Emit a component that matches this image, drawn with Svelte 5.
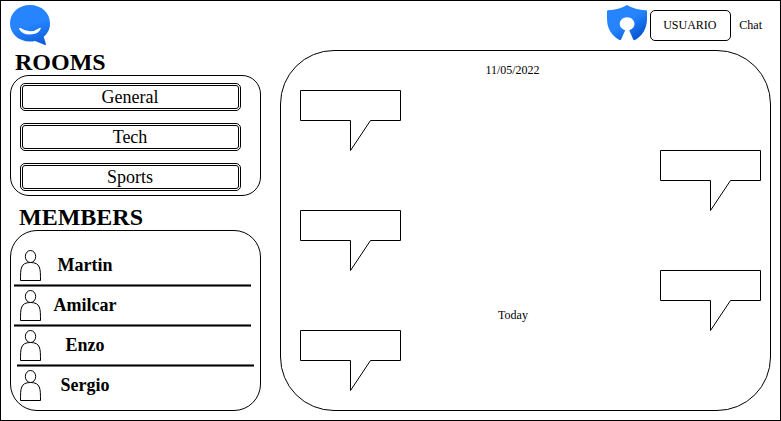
<script>
  const rooms = ['General', 'Tech', 'Sports'];
  const members = [
    { name: 'Martin', rule: 'near' },
    { name: 'Amilcar', rule: 'near' },
    { name: 'Enzo', rule: 'far' },
    { name: 'Sergio', rule: '' }
  ];
  const messages = [
    { mine: false },
    { mine: true },
    { mine: false },
    { mine: true, label: 'Today' },
    { mine: false }
  ];
</script>

<div class="frame">
  <header>
    <svg class="logo" width="41" height="41" viewBox="0 0 41 41">
      <defs>
        <linearGradient id="tail" gradientUnits="userSpaceOnUse" x1="33" y1="42" x2="25" y2="18">
          <stop offset="0" stop-color="#0a58d4" />
          <stop offset="1" stop-color="#2684ff" />
        </linearGradient>
      </defs>
      <path fill="url(#tail)" d="M20 0C31.500 0 40 7.800 40 18.500C40 24 37.800 28.500 33.700 31.700L36 39.300Q36 40.300 35 39.900L25 35.900Q22.500 36.500 20 36.500C8.500 36.500 0 28.500 0 18.500C0 7.800 8.500 0 20 0Z" />
      <path fill="#fff" d="M8.900 23.500Q9.200 22.500 10.400 23.100Q20 29.500 29.600 22.900Q30.700 22.300 31 23.300Q28.500 29.500 20 29.500Q11.500 29.500 8.900 23.500Z" />
    </svg>
    <div class="account">
      <svg width="41" height="36" viewBox="0 0 41 36">
        <defs>
          <linearGradient id="shield" gradientUnits="userSpaceOnUse" x1="35" y1="33" x2="22" y2="15">
            <stop offset="0" stop-color="#0052cc" />
            <stop offset="1" stop-color="#2684ff" />
          </linearGradient>
        </defs>
        <path fill="url(#shield)" d="M20 0Q28 5 39 5.200Q40 5.300 40 6.300V14C40 23 35.500 31 28 35Q26.500 35.500 26 34L22.200 25.300C25.500 24.300 27.500 21.900 27.500 19C27.500 15.100 24.200 12.200 20.100 12.200S12.700 15.100 12.700 19C12.700 21.900 14.700 24.300 18.200 25.300L14.200 34.200Q13.500 35.600 12 34.800C4.500 30.500 0 23 0 14V6.300Q0 5.300 1 5.200Q12 5 20 0Z" />
      </svg>
      <button>USUARIO</button>
      <span>Chat</span>
    </div>
  </header>
  <main>
    <aside>
      <h2 class="rooms-title">ROOMS</h2>
      <section class="rooms">
        {#each rooms as room}
          <button>{room}</button>
        {/each}
      </section>
      <h2 class="members-title">MEMBERS</h2>
      <section class="members">
        {#each members as member}
          <div class="member">
            <svg width="22" height="32" viewBox="0 0 22 32">
              <path fill="#fff" stroke="#000" d="M.5 30.500C.5 18.500 .5 12.500 10.500 12.500C20.500 12.500 20.500 18.500 20.500 30.500Z" />
              <ellipse cx="10.500" cy="6.500" rx="5.200" ry="6" fill="#fff" stroke="#000" />
            </svg>
            <strong>{member.name}</strong>
          </div>
          {#if member.rule}
            <div class="rule {member.rule}"></div>
          {/if}
        {/each}
      </section>
    </aside>
    <section class="chat">
      <time>11/05/2022</time>
      {#each messages as message}
        <div class="message" class:mine={message.mine}>
          {#if message.label}<span>{message.label}</span>{/if}
          <svg width="101" height="61" viewBox="0 0 101 61">
            <path fill="#fff" stroke="#000" d="M.5 .5H100.500V30.500H70.500L50.500 60.500V30.500H.5Z" />
          </svg>
        </div>
      {/each}
    </section>
  </main>
</div>

<style>
  .frame, .frame * { box-sizing: border-box; }
  .frame {
    width: 781px;
    height: 421px;
    border: 1px solid #000;
    background: #fff;
    color: #000;
    font: 12px/16px "Liberation Serif", "Times New Roman", serif;
    overflow: hidden;
  }
  svg { display: block; flex: none; }
  button {
    font-family: inherit;
    color: inherit;
    background: #fff;
    padding: 0 1px 0 0;
    margin: 0;
  }
  header {
    display: flex;
    justify-content: space-between;
    height: 49px;
    padding: 4px 18px 0 9px;
  }
  .account { display: flex; align-items: flex-start; }
  .account button {
    width: 81px;
    height: 31px;
    margin: 5px 0 0 2px;
    padding-right: 2px;
    border: 1px solid #000;
    border-radius: 5px;
    font-size: 12px;
    line-height: 29px;
  }
  .account span { margin: 12px 0 0 8px; }
  main { display: flex; gap: 19px; padding-left: 9px; }
  aside { width: 251px; }
  h2 { margin: 0; font-size: 24px; line-height: 28px; font-weight: bold; }
  .rooms-title { height: 25px; padding-left: 5px; line-height: 25px; }
  .members-title { height: 34px; padding: 7px 0 0 9px; }
  .rooms {
    display: flex;
    flex-direction: column;
    gap: 12px;
    height: 121px;
    padding: 7px 0 0 9px;
    border: 1px solid #000;
    border-radius: 19px;
  }
  .rooms button {
    width: 221px;
    height: 28px;
    flex: none;
    border: 3px double #000;
    border-radius: 5px;
    font-size: 18px;
    line-height: 22px;
  }
  .members {
    height: 181px;
    padding-top: 19px;
    border: 1px solid #000;
    border-radius: 27px;
  }
  .member { display: flex; height: 34px; padding-left: 9px; }
  .member strong {
    width: 108px;
    margin-left: -11px;
    text-align: center;
    font-size: 18px;
    line-height: 31px;
  }
  .rule {
    width: 237px;
    height: 3px;
    margin: 0 0 3px 3px;
    border: solid #777;
    border-width: 1px 0;
    background: #000;
  }
  .rule.far { margin-left: 6px; }
  .chat {
    width: 491px;
    height: 361px;
    padding: 11px 9px 0 19px;
    border: 1px solid #000;
    border-radius: 54px;
  }
  time { display: block; width: 424px; height: 28px; margin-left: -19px; padding-left: 39px; text-align: center; }
  .message { display: flex; height: 60px; }
  .message.mine { justify-content: flex-end; }
  .message span { width: 100px; margin: 37px 97px 0 0; text-align: center; }
</style>
